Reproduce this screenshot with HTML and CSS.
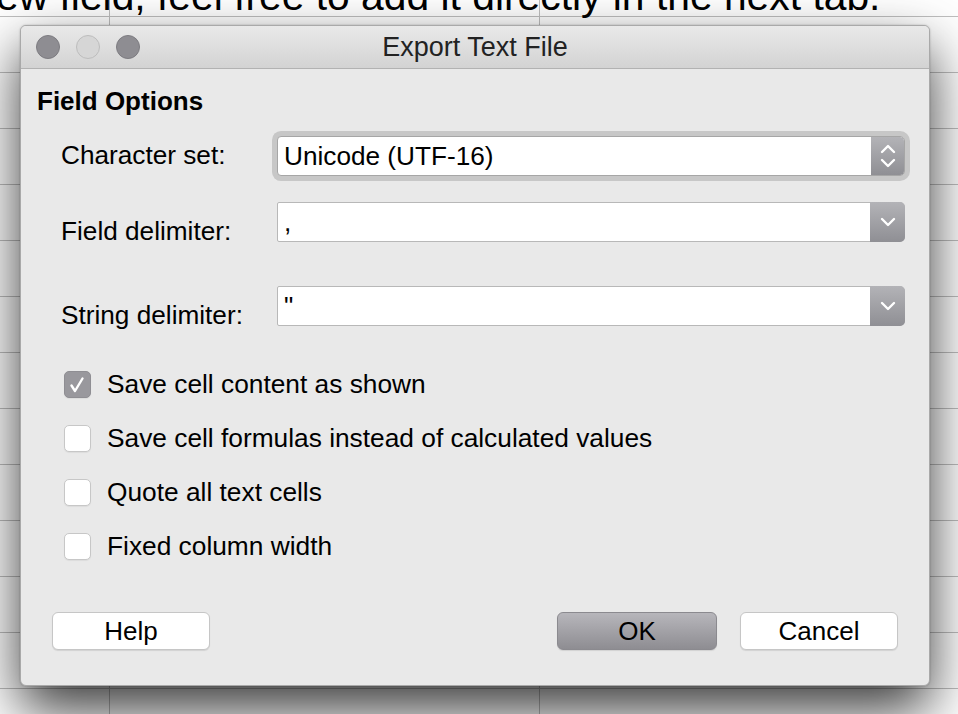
FILE: index.html
```html
<!DOCTYPE html>
<html>
<head>
<meta charset="utf-8">
<title>Export Text File</title>
<link rel="stylesheet" href="styles.css">
</head>
<body>
<div class="sheet">
  <p class="sheet-text">ew field, feel free to add it directly in the next tab.</p>
</div>
<div class="dialog">
  <div class="titlebar">
    <div class="lights">
      <span class="light dark"></span>
      <span class="light pale"></span>
      <span class="light dark"></span>
    </div>
    <div class="title">Export Text File</div>
    <div></div>
  </div>
  <div class="content">
    <h2 class="section">Field Options</h2>
    <div class="fields">
      <div class="row row-first">
        <span class="label">Character set:</span>
        <div class="select focused">
          <span class="value">Unicode (UTF-16)</span>
          <span class="drop stepper">
            <svg width="16" height="26" viewBox="0 0 16 26"><polyline points="2,9 8,3 14,9" fill="none" stroke="#fff" stroke-width="2.4" stroke-linecap="round" stroke-linejoin="round"/><polyline points="2,17 8,23 14,17" fill="none" stroke="#fff" stroke-width="2.4" stroke-linecap="round" stroke-linejoin="round"/></svg>
          </span>
        </div>
      </div>
      <div class="row row-second">
        <span class="label">Field delimiter:</span>
        <div class="select">
          <span class="value">,</span>
          <span class="drop">
            <svg width="16" height="10" viewBox="0 0 16 10"><polyline points="2,2 8,8 14,2" fill="none" stroke="#fff" stroke-width="2.4" stroke-linecap="round" stroke-linejoin="round"/></svg>
          </span>
        </div>
      </div>
      <div class="row row-third">
        <span class="label">String delimiter:</span>
        <div class="select">
          <span class="value">"</span>
          <span class="drop">
            <svg width="16" height="10" viewBox="0 0 16 10"><polyline points="2,2 8,8 14,2" fill="none" stroke="#fff" stroke-width="2.4" stroke-linecap="round" stroke-linejoin="round"/></svg>
          </span>
        </div>
      </div>
    </div>
    <div class="checks">
      <div class="check">
        <span class="box checked">
          <svg width="27" height="27" viewBox="0 0 27 27"><polyline points="7.5,14.5 11,20 18.5,7.5" fill="none" stroke="#fff" stroke-width="2.4" stroke-linecap="round" stroke-linejoin="round"/></svg>
        </span>
        <span class="check-text">Save cell content as shown</span>
      </div>
      <div class="check">
        <span class="box"></span>
        <span class="check-text">Save cell formulas instead of calculated values</span>
      </div>
      <div class="check">
        <span class="box"></span>
        <span class="check-text">Quote all text cells</span>
      </div>
      <div class="check">
        <span class="box"></span>
        <span class="check-text">Fixed column width</span>
      </div>
    </div>
    <div class="buttons">
      <button class="push">Help</button>
      <span class="spacer"></span>
      <button class="push default">OK</button>
      <button class="push">Cancel</button>
    </div>
  </div>
</div>
</body>
</html>
```

FILE: styles.css
```css
html, body {
  margin: 0;
  padding: 0;
}

body {
  width: 958px;
  height: 714px;
  overflow: hidden;
  position: relative;
  font-family: "Liberation Sans", Arial, sans-serif;
  color: #000;
}

.sheet {
  display: flow-root;
  height: 714px;
  background-color: #fff;
  background-image:
    repeating-linear-gradient(to bottom, transparent 0, transparent 16px, #bfbfbf 16px, #bfbfbf 17px, transparent 17px, transparent 56px),
    repeating-linear-gradient(to right, transparent 0, transparent 109px, #bfbfbf 109px, #bfbfbf 110px, transparent 110px, transparent 430px);
}

.sheet-text {
  margin: -24px 0 0 -4px;
  font-size: 40.8px;
  line-height: 40px;
  white-space: nowrap;
  color: #000;
}

.dialog {
  position: absolute;
  left: 20px;
  top: 25px;
  width: 910px;
  height: 661px;
  box-sizing: border-box;
  border: 1px solid #a9a9a9;
  border-radius: 6px;
  background: #e9e9e9;
  box-shadow: 0 24px 55px rgba(0, 0, 0, 0.78), 0 0 2px rgba(0, 0, 0, 0.25);
  display: flex;
  flex-direction: column;
}

.titlebar {
  height: 43px;
  box-sizing: border-box;
  border-bottom: 1px solid #b2b2b2;
  border-radius: 5px 5px 0 0;
  background: linear-gradient(to bottom, #e9e9e9, #d3d3d3);
  display: grid;
  grid-template-columns: 1fr auto 1fr;
  align-items: center;
}

.lights {
  display: flex;
  gap: 16px;
  padding-left: 15px;
}

.light {
  width: 24px;
  height: 24px;
  border-radius: 50%;
  box-sizing: border-box;
}

.light.dark {
  background: #8e8d92;
  border: 1px solid #7d7c81;
}

.light.pale {
  background: #d6d6d6;
  border: 1px solid #bdbdbd;
}

.title {
  font-size: 27px;
  color: #222;
  line-height: 30px;
}

.content {
  flex: 1;
  padding: 17px 0 0 16px;
  display: flex;
  flex-direction: column;
}

.section {
  margin: 0;
  font-size: 26px;
  font-weight: bold;
  line-height: 30px;
}

.fields {
  margin-top: 20px;
  padding-left: 24px;
  display: flex;
  flex-direction: column;
}

.row {
  display: flex;
  align-items: flex-start;
}

.row-second {
  margin-top: 26px;
}

.row-third {
  margin-top: 40px;
}

.label {
  width: 216px;
  font-size: 26.2px;
  line-height: 30px;
  padding-top: 14px;
}

.row-first .label {
  padding-top: 4px;
}

.select {
  width: 628px;
  height: 40px;
  box-sizing: border-box;
  display: flex;
  background: #fff;
  border: 1px solid #b8b8b8;
  border-radius: 2px 5px 5px 2px;
}

.select.focused {
  border-color: #a6a6a6;
  border-radius: 4px 5px 5px 4px;
  box-shadow: 0 0 0 5px #c7c7c7;
}

.value {
  flex: 1;
  padding-left: 6px;
  font-size: 26.2px;
  line-height: 38px;
  white-space: pre;
}

.drop {
  width: 35px;
  margin: -1px -1px -1px 0;
  border-radius: 0 5px 5px 0;
  background: linear-gradient(to bottom, #b3b3b7, #8f8f94);
  display: flex;
  align-items: center;
  justify-content: center;
}

.drop.stepper {
  width: 33px;
  margin: 0;
  border-radius: 0 4px 4px 0;
}

.checks {
  margin-top: 39px;
  padding-left: 27px;
  display: flex;
  flex-direction: column;
  gap: 24px;
}

.check {
  display: flex;
  align-items: center;
  gap: 16px;
  height: 30px;
}

.box {
  width: 27px;
  height: 27px;
  box-sizing: border-box;
  border-radius: 5px;
  background: #fff;
  border: 1px solid #c7c7c7;
  box-shadow: 0 1px 1px rgba(0, 0, 0, 0.06);
  display: block;
}

.box svg {
  display: block;
  margin: -1px;
}

.box.checked {
  background: #99989d;
  border-color: #8f8e93;
}

.check-text {
  font-size: 26.3px;
  line-height: 30px;
  white-space: nowrap;
}

.buttons {
  margin-top: 51px;
  padding-left: 15px;
  margin-right: 31px;
  display: flex;
  gap: 23px;
}

.spacer {
  flex: 1;
}

.push {
  width: 158px;
  height: 38px;
  box-sizing: border-box;
  border: 1px solid #c6c6c6;
  border-radius: 6px;
  background: #fff;
  box-shadow: 0 1px 1px rgba(0, 0, 0, 0.1);
  font-family: "Liberation Sans", Arial, sans-serif;
  font-size: 26px;
  line-height: 36px;
  padding: 0;
  color: #000;
  text-align: center;
}

.push.default {
  width: 160px;
  background: linear-gradient(to bottom, #b7b6bb, #8e8d92);
  border-color: #8b8a8f;
}
```
